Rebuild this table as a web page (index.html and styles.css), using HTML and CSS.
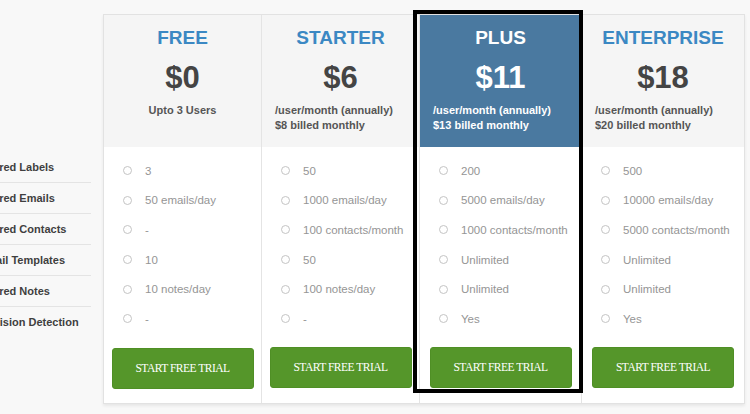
FILE: index.html
```html
<!DOCTYPE html>
<html lang="en">
<head>
<meta charset="utf-8">
<title>Pricing</title>
<link rel="stylesheet" href="styles.css">
</head>
<body>
<main class="pricing">
  <ul class="labels">
    <li>Shared Labels</li>
    <li>Shared Emails</li>
    <li>Shared Contacts</li>
    <li>Email Templates</li>
    <li>Shared Notes</li>
    <li>Collision Detection</li>
  </ul>
  <div class="table">
    <section class="plan">
      <header class="plan-head">
        <h2 class="plan-name">FREE</h2>
        <div class="price">$0</div>
        <p class="note note-center">Upto 3 Users</p>
      </header>
      <ul class="features">
        <li>3</li>
        <li>50 emails/day</li>
        <li>-</li>
        <li>10</li>
        <li>10 notes/day</li>
        <li>-</li>
      </ul>
      <button class="cta cta-low">START FREE TRIAL</button>
    </section>
    <section class="plan">
      <header class="plan-head">
        <h2 class="plan-name">STARTER</h2>
        <div class="price">$6</div>
        <p class="note">/user/month (annually)<br>$8 billed monthly</p>
      </header>
      <ul class="features">
        <li>50</li>
        <li>1000 emails/day</li>
        <li>100 contacts/month</li>
        <li>50</li>
        <li>100 notes/day</li>
        <li>-</li>
      </ul>
      <button class="cta">START FREE TRIAL</button>
    </section>
    <section class="plan plan-featured">
      <div class="highlight"></div>
      <header class="plan-head">
        <h2 class="plan-name">PLUS</h2>
        <div class="price">$11</div>
        <p class="note">/user/month (annually)<br>$13 billed monthly</p>
      </header>
      <ul class="features">
        <li>200</li>
        <li>5000 emails/day</li>
        <li>1000 contacts/month</li>
        <li>Unlimited</li>
        <li>Unlimited</li>
        <li>Yes</li>
      </ul>
      <button class="cta">START FREE TRIAL</button>
    </section>
    <section class="plan plan-last">
      <header class="plan-head">
        <h2 class="plan-name">ENTERPRISE</h2>
        <div class="price">$18</div>
        <p class="note">/user/month (annually)<br>$20 billed monthly</p>
      </header>
      <ul class="features">
        <li>500</li>
        <li>10000 emails/day</li>
        <li>5000 contacts/month</li>
        <li>Unlimited</li>
        <li>Unlimited</li>
        <li>Yes</li>
      </ul>
      <button class="cta">START FREE TRIAL</button>
    </section>
  </div>
</main>
</body>
</html>
```

FILE: styles.css
```css
* { box-sizing: border-box; }

html, body {
  margin: 0;
  padding: 0;
  background: #f8f8f8;
  font-family: "Liberation Sans", Arial, sans-serif;
  overflow: hidden;
}

.pricing {
  display: flex;
  align-items: flex-start;
  padding-top: 14px;
  height: 414px;
}

.labels {
  list-style: none;
  margin: 138px 12px 0 -21px;
  padding: 0;
  width: 112px;
  flex: none;
}

.labels li {
  height: 31px;
  line-height: 30px;
  border-bottom: 1px solid #e4e4e4;
  font-size: 11px;
  font-weight: bold;
  color: #3f3f3f;
  white-space: nowrap;
}

.labels li:last-child { border-bottom: none; }

.table {
  display: grid;
  grid-template-columns: 158px 158px 162px 162px;
  border: 1px solid #e2e2e2;
  background: #fff;
  box-shadow: 0 2px 3px rgba(0, 0, 0, 0.07);
  flex: none;
}

.plan {
  position: relative;
  display: flex;
  flex-direction: column;
  border-right: 1px solid #e4e4e4;
}

.plan-last { border-right: none; }

.plan-head {
  height: 132px;
  background: #f5f5f5;
  padding-top: 11px;
}

.plan-name {
  margin: 0;
  text-align: center;
  font-size: 19px;
  line-height: 24px;
  font-weight: bold;
  color: #3b88c3;
}

.price {
  margin-top: 9px;
  text-align: center;
  font-size: 31px;
  line-height: 38px;
  font-weight: bold;
  color: #444;
}

.note {
  margin: 6px 0 0;
  padding-left: 13px;
  font-size: 11px;
  line-height: 15px;
  font-weight: bold;
  color: #555;
}

.note-center {
  padding-left: 0;
  text-align: center;
}

.plan-featured .plan-head { background: #4a79a0; }
.plan-featured .plan-name,
.plan-featured .price,
.plan-featured .note { color: #fff; }

.highlight {
  position: absolute;
  left: -7px;
  top: -5px;
  width: 170px;
  height: 383px;
  border: 4px solid #000;
  pointer-events: none;
  z-index: 2;
}

.features {
  list-style: none;
  margin: 0;
  padding: 9px 0 0;
}

.features li {
  display: flex;
  align-items: center;
  height: 29.6px;
  padding-left: 19px;
  font-size: 11.5px;
  color: #959595;
  white-space: nowrap;
}

.features li::before {
  content: "";
  width: 7px;
  height: 7px;
  border: 1px solid #c4c4c4;
  border-radius: 50%;
  margin-right: 13px;
  flex: none;
}

.cta {
  align-self: center;
  width: 142px;
  height: 41px;
  margin: 13px 0 15px;
  background: #55962a;
  border: 1px solid #4f8f25;
  border-radius: 3px;
  color: #fff;
  font-family: "Liberation Serif", "Times New Roman", serif;
  font-size: 11.5px;
  letter-spacing: -0.5px;
  padding: 0;
}

.cta-low {
  position: relative;
  top: 1px;
}
```
